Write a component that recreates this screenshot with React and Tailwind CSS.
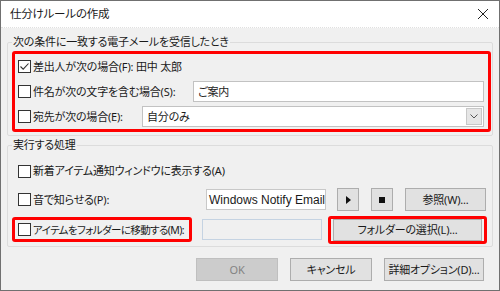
import React from 'react';

const Check = ({ checked }) => (
    <span className="w-[13px] h-[13px] border border-[#333333] bg-white flex items-center justify-center shrink-0">
        {checked && (
            <svg width="11" height="11" viewBox="0 0 11 11">
                <path d="M1.5 5.5 L4.2 8.2 L9.5 2.5" stroke="#333" strokeWidth="1.1" fill="none" />
            </svg>
        )}
    </span>
);

const Button = ({ children, className = '', disabled }) => (
    <div
        className={`flex items-center justify-center border shrink-0 ${
            disabled ? 'bg-[#cccccc] border-[#bfbfbf] text-[#838383]' : 'bg-[#e1e1e1] border-[#adadad] text-[#1a1a1a]'
        } ${className}`}
    >
        {children}
    </div>
);

const App = () => {
    return (
        <div className="w-[500px] h-[291px] border border-[#707070] bg-[#f0f0f0] flex flex-col font-['Noto_Sans','Noto_Sans_CJK_JP',sans-serif] [font-feature-settings:'palt'] text-[#1a1a1a] text-[11px] tracking-[-0.2px] leading-[16px] whitespace-nowrap overflow-hidden">
            {/* Title bar */}
            <div className="h-[27px] bg-white flex items-center justify-between pl-[9px] pr-[8px] border-b border-dotted border-[#e0e0e0] shrink-0">
                <span className="text-[11.5px]">仕分けルールの作成</span>
                <svg width="12" height="12" viewBox="0 0 12 12" className="mr-[2px]">
                    <path d="M1 1 L11 11 M11 1 L1 11" stroke="#222" strokeWidth="1" />
                </svg>
            </div>

            {/* Conditions */}
            <fieldset className="mx-[6px] mt-[6px] border border-[#dcdcdc] rounded-[2px] pl-[4px] pr-[1px] pb-[3px]">
                <legend className="px-[1px]">次の条件に一致する電子メールを受信したとき</legend>
                <div className="mt-[1px] border-[3px] border-[#ff0000] rounded-[3px] pl-[3px] pr-[4px] flex flex-col">
                    <div className="h-[25px] flex items-center gap-[2px]">
                        <Check checked />
                        <span>差出人が次の場合(F): 田中 太郎</span>
                    </div>
                    <div className="h-[25px] flex items-center gap-[2px]">
                        <Check />
                        <span>件名が次の文字を含む場合(S):</span>
                        <div className="ml-auto w-[291px] h-[21px] bg-white border border-[#c2c2c2] flex items-center px-[4px] shrink-0">
                            ご案内
                        </div>
                    </div>
                    <div className="h-[25px] flex items-center gap-[2px]">
                        <Check />
                        <span>宛先が次の場合(E):</span>
                        <div className="ml-auto w-[342px] h-[21px] bg-white border border-[#c2c2c2] flex items-center pl-[4px] pr-[1px] shrink-0">
                            <span className="flex-1">自分のみ</span>
                            <span className="w-[16px] h-[17px] bg-[#e6e6e6] border border-[#c8c8c8] flex items-center justify-center">
                                <svg width="8" height="5" viewBox="0 0 8 5">
                                    <path d="M0.5 0.5 L4 4 L7.5 0.5" stroke="#555" strokeWidth="1" fill="none" />
                                </svg>
                            </span>
                        </div>
                    </div>
                </div>
            </fieldset>

            {/* Actions */}
            <fieldset className="mx-[6px] mt-[1px] border border-[#dcdcdc] rounded-[2px] pl-[4px] pr-[1px] pb-[2px]">
                <legend className="px-[1px]">実行する処理</legend>
                <div className="mt-[5px] h-[26px] flex items-center gap-[2px] pl-[6px]">
                    <Check />
                    <span>新着アイテム通知ウィンドウに表示する(A)</span>
                </div>
                <div className="h-[31px] flex items-center pl-[6px]">
                    <Check />
                    <span className="ml-[2px]">音で知らせる(P):</span>
                    <div className="ml-auto w-[120px] h-[21px] bg-white border border-[#c8c8c8] flex items-center pl-[2px] overflow-hidden shrink-0 font-['Liberation_Sans',sans-serif] text-[12px] tracking-normal">
                        Windows Notify Email
                    </div>
                    <Button className="ml-[11px] w-[22px] h-[23px]">
                        <svg width="5" height="8" viewBox="0 0 5 8">
                            <path d="M0 0 L5 4 L0 8 Z" fill="#111" />
                        </svg>
                    </Button>
                    <Button className="ml-[12px] w-[22px] h-[23px]">
                        <span className="w-[6px] h-[6px] bg-[#111]" />
                    </Button>
                    <Button className="ml-[12px] w-[81px] h-[23px] mr-[5px]">参照(W)...</Button>
                </div>
                <div className="h-[29px] flex items-center">
                    <div className="w-[180px] h-[25px] border-[3px] border-[#ff0000] rounded-[3px] flex items-center gap-[2px] pl-[3px] shrink-0 overflow-hidden">
                        <Check />
                        <span className="text-[10.5px] tracking-[-0.6px]">アイテムをフォルダーに移動する(M):</span>
                    </div>
                    <div className="ml-[10px] w-[120px] h-[21px] bg-[#f0f0f0] border border-[#c5d3e2] shrink-0" />
                    <div className="ml-[6px] w-[159px] h-[28px] border-[3px] border-[#ff0000] rounded-[3px] flex items-center px-[2px] shrink-0">
                        <Button className="w-full h-[22px]">フォルダーの選択(L)...</Button>
                    </div>
                </div>
            </fieldset>

            {/* Footer buttons */}
            <div className="mt-[11px] flex pl-[195px]">
                <Button disabled className="w-[82px] h-[23px]">OK</Button>
                <Button className="ml-[12px] w-[82px] h-[23px]">キャンセル</Button>
                <Button className="ml-[12px] w-[100px] h-[23px]">詳細オプション(D)...</Button>
            </div>
        </div>
    );
};

export default App;
